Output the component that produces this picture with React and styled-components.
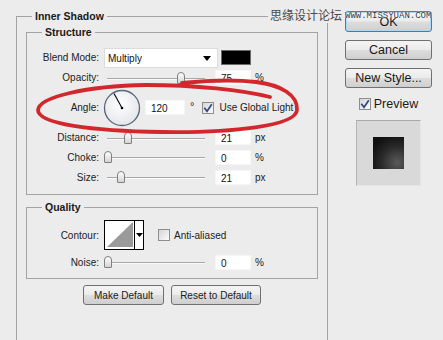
import styled, { createGlobalStyle } from "styled-components";

const GlobalStyle = createGlobalStyle`
  html, body {
    margin: 0;
    padding: 0;
    background: #ececec;
    overflow: hidden;
  }
  body {
    font-family: "Liberation Sans", Arial, sans-serif;
    font-size: 10px;
    color: #1e1e1e;
  }
`;

const sliders = {
  opacity: 0.75,
  distance: 0.206,
  choke: 0,
  size: 0.134,
  noise: 0,
};

const Slider = ({ value }) => (
  <Track>
    <Thumb style={{ left: `${value * 97}px` }} />
  </Track>
);

const CheckBox = ({ checked }) => (
  <Box>
    {checked && (
      <svg width="10" height="10" viewBox="0 0 10 10">
        <path d="M1.3 4.8 L4 8.2 L8.8 1.2" stroke="#34467e" strokeWidth="1.7" fill="none" />
      </svg>
    )}
  </Box>
);

const AngleDial = () => (
  <Dial width="38" height="38" viewBox="0 0 38 38">
    <defs>
      <radialGradient id="dialFill" cx="45%" cy="40%" r="60%">
        <stop offset="0%" stopColor="#ffffff" />
        <stop offset="100%" stopColor="#e4e6ea" />
      </radialGradient>
    </defs>
    <circle cx="19" cy="19" r="17.5" fill="url(#dialFill)" stroke="#5b6478" strokeWidth="1.3" />
    <line x1="19" y1="19" x2="11" y2="4.6" stroke="#000" strokeWidth="1.1" />
    <circle cx="19" cy="19" r="1.3" fill="#000" />
  </Dial>
);

const ContourPicker = () => (
  <Contour>
    <ContourCurve>
      <svg width="29" height="28" viewBox="0 0 29 28">
        <polygon points="2,26 28,1 28,26" fill="#9a9a9a" />
      </svg>
    </ContourCurve>
    <ContourArrow>
      <svg width="7" height="4" viewBox="0 0 7 4">
        <polygon points="0,0 7,0 3.5,4" fill="#000" />
      </svg>
    </ContourArrow>
  </Contour>
);

const App = () => {
  return (
    <Page>
      <GlobalStyle />
      <OuterBox>
        <Legend $offset={6}>Inner Shadow</Legend>
        <Group>
          <Legend $offset={15}>Structure</Legend>
          <Row $h={21}>
            <Label>Blend Mode:</Label>
            <Select>
              Multiply
              <svg width="8" height="5" viewBox="0 0 8 5">
                <polygon points="0,0 8,0 4,5" fill="#000" />
              </svg>
            </Select>
            <Swatch />
          </Row>
          <Row $h={19}>
            <Label>Opacity:</Label>
            <Slider value={sliders.opacity} />
            <ValueBox>75</ValueBox>
            <Unit>%</Unit>
          </Row>
          <Row $h={41}>
            <Label>Angle:</Label>
            <AngleDial />
            <ValueBox $w={40}>120</ValueBox>
            <Degree>°</Degree>
            <CheckLabel $gap={5} $ml={8}>
              <CheckBox checked />
              Use Global Light
            </CheckLabel>
          </Row>
          <Row $h={19}>
            <Label>Distance:</Label>
            <Slider value={sliders.distance} />
            <ValueBox>21</ValueBox>
            <Unit>px</Unit>
          </Row>
          <Row $h={20}>
            <Label>Choke:</Label>
            <Slider value={sliders.choke} />
            <ValueBox>0</ValueBox>
            <Unit>%</Unit>
          </Row>
          <Row $h={20}>
            <Label>Size:</Label>
            <Slider value={sliders.size} />
            <ValueBox>21</ValueBox>
            <Unit>px</Unit>
          </Row>
        </Group>

        <Group $top={6} $pt={7} $pb={6}>
          <Legend $offset={15}>Quality</Legend>
          <Row $h={30}>
            <Label>Contour:</Label>
            <ContourPicker />
            <CheckLabel $gap={4} $ml={14}>
              <CheckBox />
              Anti-aliased
            </CheckLabel>
          </Row>
          <Row $h={20} $mt={2}>
            <Label>Noise:</Label>
            <Slider value={sliders.noise} />
            <ValueBox>0</ValueBox>
            <Unit>%</Unit>
          </Row>
        </Group>

        <ButtonRow>
          <SmallButton $w={81}>Make Default</SmallButton>
          <SmallButton $w={90}>Reset to Default</SmallButton>
        </ButtonRow>
      </OuterBox>

      <SideColumn>
        <DialogButton $primary $h={21}>OK</DialogButton>
        <DialogButton>Cancel</DialogButton>
        <DialogButton>New Style...</DialogButton>
        <PreviewToggle>
          <CheckBox checked />
          Preview
        </PreviewToggle>
        <PreviewWell>
          <PreviewSwatch />
        </PreviewWell>
      </SideColumn>

      <MarkCn>思缘设计论坛</MarkCn>
      <MarkUrl>WWW.MISSYUAN.COM</MarkUrl>

      <Scribble width="443" height="340" viewBox="0 0 443 340">
        <path
          d="M270 97 C242 90 196 85 146 85 C86 86 39 97 38 110 C38 124 92 131 162 132 C232 133 296 126 297 110 C298 95 281 85 256 82 C230 79 202 81 182 83"
          fill="none"
          stroke="#d3272e"
          strokeWidth="3.8"
          strokeLinecap="round"
        />
      </Scribble>
    </Page>
  );
};

const Page = styled.div`
  position: relative;
  width: 443px;
  height: 340px;
  box-sizing: border-box;
  display: flex;
  align-items: flex-start;
  padding: 10px 0 0 16px;
  overflow: hidden;
`;

const OuterBox = styled.fieldset`
  width: 312px;
  height: 370px;
  box-sizing: border-box;
  min-width: 0;
  margin: 0;
  padding: 4px 9px 0;
  border: 1px solid #a3a3a3;
`;

const Legend = styled.legend`
  margin-left: ${(p) => p.$offset}px;
  padding: 0 3px;
  font-size: 10.5px;
  line-height: 12px;
  font-weight: bold;
  color: #1a1a1a;
`;

const Group = styled.fieldset`
  min-width: 0;
  margin: ${(p) => p.$top || 0}px 0 0;
  padding: ${(p) => p.$pt ?? 9}px 0 ${(p) => p.$pb ?? 7}px;
  border: 1px solid #a3a3a3;
  display: flex;
  flex-direction: column;
`;

const Row = styled.div`
  display: flex;
  align-items: center;
  height: ${(p) => p.$h}px;
  margin-top: ${(p) => p.$mt || 0}px;
`;

const Label = styled.span`
  flex: none;
  width: 72px;
  margin-right: 5px;
  text-align: right;
  color: #222;
`;

const Select = styled.div`
  width: 114px;
  height: 20px;
  box-sizing: border-box;
  display: flex;
  align-items: center;
  justify-content: space-between;
  padding: 2px 6px 0 3px;
  background: #fff;
  border: 1px solid #dcdcdc;
  color: #111;
`;

const Swatch = styled.div`
  width: 30px;
  height: 15px;
  margin-left: 3px;
  box-sizing: border-box;
  background: #000;
  border: 1px solid #6a6a6a;
`;

const Track = styled.div`
  position: relative;
  flex: none;
  width: 104px;
  height: 14px;

  &::before {
    content: "";
    position: absolute;
    left: 3px;
    right: 3px;
    top: 7px;
    height: 1px;
    background: #a8a8a8;
    box-shadow: 0 1px 0 #fafafa;
  }
`;

const Thumb = styled.div`
  position: absolute;
  top: 1px;
  width: 8px;
  height: 12px;
  box-sizing: border-box;
  border: 1px solid #7f7f7f;
  border-radius: 4px 4px 1px 1px;
  background: linear-gradient(#ffffff, #d4d4d4);
`;

const ValueBox = styled.div`
  flex: none;
  width: ${(p) => p.$w || 36}px;
  height: 15px;
  margin-left: ${(p) => (p.$w ? 4 : 7)}px;
  box-sizing: border-box;
  padding: 2px 0 0 5px;
  background: #fff;
  border: 1px solid #f6f6f6;
  color: #111;
  line-height: 12px;
`;

const Unit = styled.span`
  margin-left: 4px;
  color: #222;
`;

const Degree = styled.span`
  margin-left: 5px;
  margin-top: -4px;
  font-size: 11px;
`;

const Dial = styled.svg`
  flex: none;
  margin-left: -1px;
`;

const CheckLabel = styled.span`
  display: flex;
  align-items: center;
  gap: ${(p) => p.$gap}px;
  margin-left: ${(p) => p.$ml}px;
  color: #222;
`;

const Box = styled.span`
  flex: none;
  width: 12px;
  height: 12px;
  box-sizing: border-box;
  display: inline-flex;
  align-items: center;
  justify-content: center;
  border: 1px solid #8d8d8d;
  background: linear-gradient(135deg, #d6d6d6, #fbfbfb);
`;

const Contour = styled.div`
  flex: none;
  width: 40px;
  height: 30px;
  box-sizing: border-box;
  display: flex;
  border: 1px solid #000;
  background: #fff;
`;

const ContourCurve = styled.div`
  width: 29px;
  display: flex;
  align-items: flex-end;
`;

const ContourArrow = styled.div`
  flex: 1;
  display: flex;
  align-items: center;
  justify-content: center;
  border-left: 1px solid #000;
`;

const ButtonRow = styled.div`
  display: flex;
  justify-content: center;
  gap: 7px;
  margin-top: 6px;
`;

const buttonFace = `
  box-sizing: border-box;
  display: flex;
  align-items: center;
  justify-content: center;
  border: 1px solid #707070;
  border-radius: 3px;
  background: linear-gradient(#f4f4f4 0%, #ebebeb 48%, #dddddd 52%, #cfcfcf 100%);
  color: #1a1a1a;
`;

const SmallButton = styled.div`
  ${buttonFace}
  width: ${(p) => p.$w}px;
  height: 20px;
  font-size: 10px;
`;

const SideColumn = styled.div`
  display: flex;
  flex-direction: column;
  width: 87px;
  margin: 1px 0 0 17px;
  gap: 8px;
`;

const DialogButton = styled.div`
  ${buttonFace}
  height: ${(p) => p.$h || 20}px;
  font-size: 12.5px;
  border-color: ${(p) => (p.$primary ? "#3c7fb1" : "#707070")};
  box-shadow: ${(p) => (p.$primary ? "inset 0 0 0 1px #a9d9f4" : "none")};
`;

const PreviewToggle = styled.div`
  display: flex;
  align-items: center;
  justify-content: center;
  gap: 3px;
  margin-top: 1px;
  font-size: 12.5px;
  color: #1a1a1a;
`;

const PreviewWell = styled.div`
  width: 65px;
  height: 66px;
  box-sizing: border-box;
  margin: 1px auto 0;
  display: flex;
  align-items: center;
  justify-content: center;
  background: #d9d9d9;
  border: 1px solid #e6e6e6;
  border-top-color: #a9a9a9;
  border-left-color: #b4b4b4;
`;

const PreviewSwatch = styled.div`
  width: 31px;
  height: 32px;
  background: radial-gradient(circle at 78% 80%, #5a5a5a 0%, #2a2a2a 45%, #111 80%);
`;

const MarkCn = styled.span`
  position: absolute;
  left: 268px;
  top: 7px;
  padding: 0 2px;
  background: #ececec;
  font-family: "Noto Sans CJK SC", sans-serif;
  font-size: 12px;
  line-height: 16px;
  color: #4a4a4a;
`;

const MarkUrl = styled.span`
  position: absolute;
  left: 345px;
  top: 11px;
  font-family: "Liberation Mono", monospace;
  font-size: 9px;
  line-height: 10px;
  color: #2c3a48;
  text-shadow: 0 0 1px #fff, 0 0 1px #fff;
`;

const Scribble = styled.svg`
  position: absolute;
  left: 0;
  top: 0;
  pointer-events: none;
`;

export default App;
